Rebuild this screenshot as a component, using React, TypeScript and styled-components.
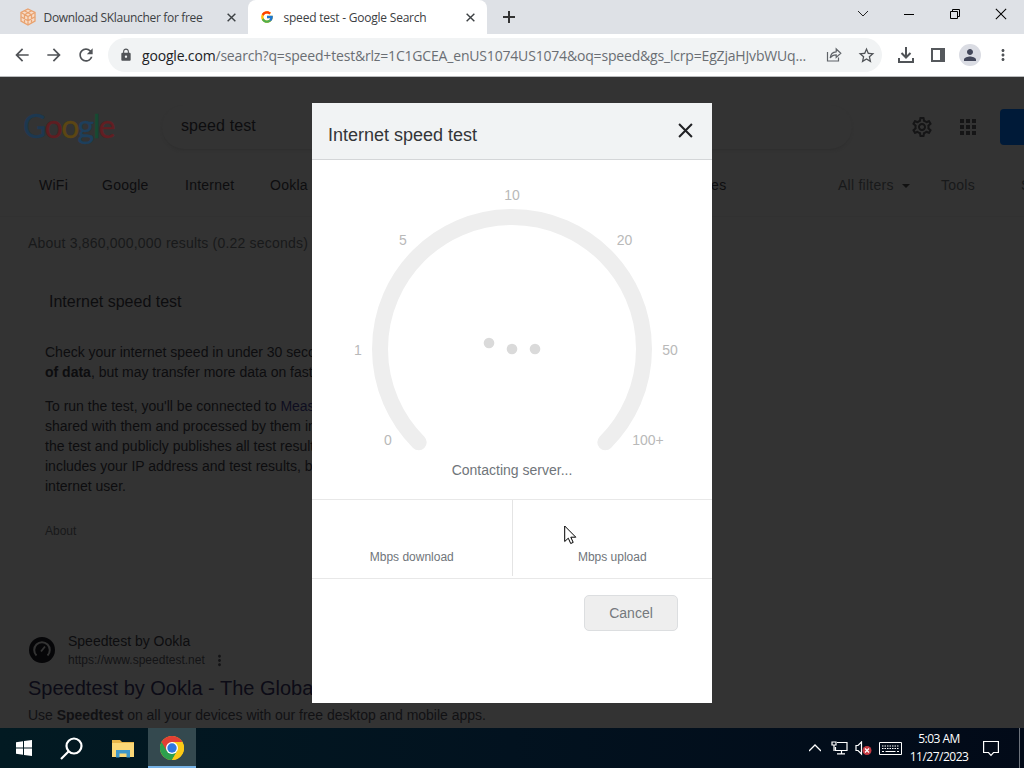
import styled, { createGlobalStyle } from 'styled-components';
import {
  MdApps,
  MdArrowBack,
  MdArrowForward,
  MdLock,
  MdMoreVert,
  MdOutlineSettings,
  MdPerson,
  MdRefresh,
  MdStarBorder,
} from 'react-icons/md';
import { FcGoogle } from 'react-icons/fc';

const filters = [
  { label: 'WiFi', width: 63 },
  { label: 'Google', width: 83 },
  { label: 'Internet', width: 85 },
  { label: 'Ookla', width: 409 },
];

const marks = [
  { label: '0', x: 76, y: 286 },
  { label: '1', x: 46, y: 196 },
  { label: '5', x: 91, y: 86 },
  { label: '10', x: 200, y: 41 },
  { label: '20', x: 312.5, y: 86 },
  { label: '50', x: 358, y: 196 },
  { label: '100+', x: 336, y: 286 },
];

const CloseIcon = ({ size, weight }: { size: number; weight: number }) => (
  <svg width={size} height={size} viewBox='0 0 14 14' stroke='currentColor' strokeWidth={weight}>
    <path d='M1 1l12 12M13 1L1 13' />
  </svg>
);

const CubeIcon = () => (
  <svg width='16' height='18' viewBox='0 0 16 18' fill='none' stroke='#e9a26f' strokeWidth='1.3'>
    <path d='M8 1l7 3.5v8.5L8 17l-7-4V4.5z' fill='#f7dcc8' />
    <path d='M1 4.5l7 4 7-4M8 8.5V17M4.500 2.800l7 4v8M11.5 2.800l-7 4v8M1 8.800l7 4 7-4' />
  </svg>
);

const ShareIcon = () => (
  <svg width='16' height='16' viewBox='0 0 16 16' fill='none' stroke='#5f6368' strokeWidth='1.2'>
    <path d='M1.5 5v9h11v-3.5' />
    <path d='M4.2 11c.4-4 2.6-6 6-6.2V2l4.6 4.3-4.6 4.2V7.8C7.5 7.8 5.6 8.8 4.2 11z' />
  </svg>
);

const DownloadIcon = () => (
  <svg width='18' height='18' viewBox='0 0 18 18' fill='none' stroke='#505357' strokeWidth='2'>
    <path d='M9 1v10M4.5 7L9 11.5 13.5 7M2 12v4h14v-4' />
  </svg>
);

const SidePanelIcon = () => (
  <svg width='14' height='14' viewBox='0 0 14 14' fill='none'>
    <path d='M1 1h12v12H1z' stroke='#55585c' strokeWidth='2' />
    <path d='M9 1h4v12H9z' fill='#55585c' />
  </svg>
);

const ChromeIcon = () => (
  <svg width='24' height='24' viewBox='0 0 24 24'>
    <circle cx='12' cy='12' r='12' fill='#fbc916' />
    <path d='M12 12L1.6 6A12 12 0 0 0 12 24l5.2-9z' fill='#2da04d' />
    <path d='M1.6 6a12 12 0 0 1 20.8 0H12v6l-5.2 3z' fill='#e23f34' />
    <path d='M12 6h10.4A12 12 0 0 1 12 24l5.2-9z' fill='#fbc916' />
    <circle cx='12' cy='12' r='6' fill='#fff' />
    <circle cx='12' cy='12' r='4.7' fill='#2f77e0' />
  </svg>
);

const App = () => (
  <>
    <GlobalStyle />
    <Screen>
      <TabStrip>
        <Tab $width={248}>
          <TabIcon>
            <CubeIcon />
          </TabIcon>
          <TabTitle $spacing={-0.32}>Download SKlauncher for free</TabTitle>
          <CloseIcon size={9} weight={2.2} />
        </Tab>
        <Tab $width={239} $active>
          <TabIcon>
            <FcGoogle size={14} />
          </TabIcon>
          <TabTitle $spacing={-0.22}>speed test - Google Search</TabTitle>
          <CloseIcon size={9} weight={2.2} />
        </Tab>
        <NewTab>
          <svg width='12' height='12' viewBox='0 0 12 12' stroke='#333' strokeWidth='2'>
            <path d='M6 0v12M0 6h12' />
          </svg>
        </NewTab>
        <WindowButtons>
          <svg width='12' height='12' viewBox='0 0 12 12' fill='none' stroke='#222'>
            <path d='M1 3l5 5 5-5' />
          </svg>
          <svg width='10' height='12' viewBox='0 0 10 12' fill='none' stroke='#000'>
            <path d='M0 6.5h10' />
          </svg>
          <svg width='10' height='10' viewBox='0 0 10 10' fill='none' stroke='#000'>
            <path d='M.5 2.5h7v7h-7zM2.5 2.5v-2h7v7h-2' />
          </svg>
          <CloseIcon size={12} weight={1.2} />
        </WindowButtons>
      </TabStrip>

      <Toolbar>
        <NavButtons>
          <MdArrowBack />
          <MdArrowForward />
          <MdRefresh />
        </NavButtons>
        <AddressBar>
          <MdLock size={14} />
          <Url>
            <b>google.com</b>/search?q=speed+test&amp;rlz=1C1GCEA_enUS1074US1074&amp;oq=speed&amp;gs_lcrp=EgZjaHJvbWUq...
          </Url>
          <ShareIcon />
          <MdStarBorder size={19} />
        </AddressBar>
        <ToolbarActions>
          <DownloadIcon />
          <SidePanelIcon />
          <Avatar>
            <MdPerson size={18} />
          </Avatar>
          <MdMoreVert size={18} />
        </ToolbarActions>
      </Toolbar>

      <Page>
        <SearchHeader>
          <Logo>
            <Letter $color='#1d3850'>G</Letter>
            <Letter $color='#5e1d21'>o</Letter>
            <Letter $color='#5c4613'>o</Letter>
            <Letter $color='#1d3f5c'>g</Letter>
            <Letter $color='#164a32'>l</Letter>
            <Letter $color='#621e22'>e</Letter>
          </Logo>
          <SearchBox>speed test</SearchBox>
          <HeaderActions>
            <MdOutlineSettings size={24} />
            <MdApps size={24} />
            <SignIn />
          </HeaderActions>
        </SearchHeader>

        <FilterRow>
          {filters.map(({ label, width }) => (
            <Filter key={label} $width={width}>
              {label}
            </Filter>
          ))}
          <Filter $width={159}>Images</Filter>
          <Filter $width={68} $dim>
            All filters
          </Filter>
          <Caret />
          <Filter $width={80} $dim>
            Tools
          </Filter>
          <Filter $width={80} $dim>
            S
          </Filter>
        </FilterRow>
        <Stats>About 3,860,000,000 results (0.22 seconds)</Stats>

        <Card>
          <CardTitle>Internet speed test</CardTitle>
          <Paragraph>
            Check your internet speed in under 30 seconds.
            <br />
            <b>of data</b>, but may transfer more data on fast
          </Paragraph>
          <Paragraph>
            To run the test, you'll be connected to <Purple>Meas</Purple>
            <br />
            shared with them and processed by them in
            <br />
            the test and publicly publishes all test results
            <br />
            includes your IP address and test results, b<br />
            internet user.
          </Paragraph>
          <About>About</About>
        </Card>

        <Result>
          <ResultSite>
            <svg width='26' height='26' viewBox='0 0 26 26' fill='none'>
              <circle cx='13' cy='13' r='13' fill='#060608' />
              <path d='M7.5 18.5a7.8 7.8 0 1 1 11 0' stroke='#333' strokeWidth='2' />
              <path d='M12 14.5l4-5' stroke='#333' strokeWidth='1.8' />
            </svg>
            <div>
              <SiteName>Speedtest by Ookla</SiteName>
              <SiteUrl>
                https://www.speedtest.net
                <MdMoreVert size={17} />
              </SiteUrl>
            </div>
          </ResultSite>
          <ResultTitle>Speedtest by Ookla - The Global</ResultTitle>
          <ResultText>
            Use <b>Speedtest</b> on all your devices with our free desktop and mobile apps.
          </ResultText>
        </Result>

        <Overlay>
          <Dialog>
            <DialogHeader>
              Internet speed test
              <CloseIcon size={15} weight={1.9} />
            </DialogHeader>
            <GaugeArea>
              <svg width='400' height='296' viewBox='0 0 400 296'>
                <path
                  d='M106.7 282.3A132 132 0 1 1 293.3 282.3'
                  fill='none'
                  stroke='#eee'
                  strokeWidth='16'
                  strokeLinecap='round'
                />
                {marks.map(({ label, x, y }) => (
                  <Mark key={label} x={x} y={y - 1}>
                    {label}
                  </Mark>
                ))}
                <circle cx='177' cy='183' r='5.3' fill='#dadada' />
                <circle cx='200' cy='189' r='5.3' fill='#dadada' />
                <circle cx='223' cy='189' r='5.3' fill='#dadada' />
              </svg>
              <Status>Contacting server...</Status>
            </GaugeArea>
            <Speeds>
              <Speed>Mbps download</Speed>
              <Divider />
              <Speed>Mbps upload</Speed>
            </Speeds>
            <DialogFooter>
              <CancelButton>Cancel</CancelButton>
            </DialogFooter>
          </Dialog>
        </Overlay>
      </Page>

      <Taskbar>
        <TaskItem>
          <svg width='16' height='16' viewBox='0 0 16 16' fill='#fff'>
            <path d='M0 2.3L7 1.3v6.2H0zM8 1.1L16 0v7.5H8zM0 8.5h7v6.2l-7-1zM8 8.5h8V16l-8-1.1z' />
          </svg>
        </TaskItem>
        <TaskItem>
          <svg width='23' height='23' viewBox='0 0 23 23' fill='none' stroke='#fff' strokeWidth='2.2'>
            <circle cx='14' cy='9' r='7.5' />
            <path d='M8.5 14.5L1 22' />
          </svg>
        </TaskItem>
        <TaskItem>
          <svg width='22' height='19' viewBox='0 0 22 19'>
            <path d='M0 1h8l2 2h12v15H0z' fill='#e8b64a' />
            <path d='M0 4h22v14H0z' fill='#fbd877' />
            <path d='M4 18.5V11h14v7.5h-3.500V14.5h-7v4z' fill='#3f97c9' />
          </svg>
        </TaskItem>
        <TaskItem $active>
          <ChromeIcon />
        </TaskItem>
        <Tray>
          <svg width='12' height='8' viewBox='0 0 12 8' fill='none' stroke='#fff' strokeWidth='1.3'>
            <path d='M0 7l6-6 6 6' />
          </svg>
          <svg width='17' height='14' viewBox='0 0 17 14' fill='none' stroke='#fff' strokeWidth='1.2'>
            <path d='M6 1.5h10v8H4.5V6M10.5 9.5v3M6 12.8h8M1 1h4v3H1zM3 4v6' />
          </svg>
          <svg width='17' height='15' viewBox='0 0 17 15' fill='none'>
            <path d='M1 4.5h2L6.5 1v12L3 9.5H1z' stroke='#fff' strokeWidth='1.2' />
            <circle cx='12' cy='9.5' r='4.5' fill='#c63b43' />
            <path d='M10 7.5l4 4M14 7.5l-4 4' stroke='#fff' strokeWidth='1.2' />
          </svg>
          <svg width='23' height='13' viewBox='0 0 23 13' fill='none' stroke='#fff'>
            <path d='M.5 .5h22v12H.5z' />
            <path d='M3 4h17M3 6.5h17' strokeDasharray='1.5 1' />
            <path d='M3 9.5h2M6.5 9.5h10M18 9.5h2' />
          </svg>
          <Clock>
            <span>5:03 AM</span>
            <span>11/27/2023</span>
          </Clock>
          <svg width='16' height='17' viewBox='0 0 16 17' fill='none' stroke='#fff' strokeWidth='1.2'>
            <path d='M.6 1.5h14.8v11h-4.9L8 15.3 5.5 12.5H.6z' />
          </svg>
        </Tray>
      </Taskbar>

      <Cursor width='13' height='20' viewBox='0 0 13 20'>
        <path
          d='M.7 1v15.5l3.6-3.3 2.4 5.3 2.5-1.1-2.4-5.2h5z'
          fill='#fff'
          stroke='#000'
          strokeWidth='1'
        />
      </Cursor>
    </Screen>
  </>
);

export default App;

const GlobalStyle = createGlobalStyle`
  * {
    box-sizing: border-box;
  }

  body {
    margin: 0;
    overflow: hidden;
    font-family: 'Liberation Sans', Arial, sans-serif;
  }

  svg {
    display: block;
    flex-shrink: 0;
  }
`;

const Screen = styled.div`
  position: relative;
  display: flex;
  flex-direction: column;
  width: 1024px;
  height: 768px;
  overflow: hidden;
`;

const TabStrip = styled.div`
  display: flex;
  height: 34px;
  background: #dee1e6;
`;

const Tab = styled.div<{ $width: number; $active?: boolean }>`
  display: flex;
  align-items: center;
  width: ${({ $width }) => $width}px;
  padding: 0 12px 0 ${({ $active }) => ($active ? 12 : 20)}px;
  border-radius: 8px 8px 0 0;
  background: ${({ $active }) => ($active ? '#fff' : 'transparent')};
  color: #3c4043;
`;

const TabIcon = styled.div`
  display: flex;
  width: 24px;
`;

const TabTitle = styled.div<{ $spacing: number }>`
  flex: 1;
  margin-left: -0.5px;
  font-family: 'Open Sans', sans-serif;
  font-size: 12px;
  letter-spacing: ${({ $spacing }) => $spacing}px;
  white-space: nowrap;
`;

const NewTab = styled.div`
  display: flex;
  align-items: center;
  flex: 1;
  padding-left: 16px;
`;

const WindowButtons = styled.div`
  display: flex;
  align-items: center;
  gap: 35.5px;
  padding: 0 17px 6px 0;
`;

const Toolbar = styled.div`
  display: flex;
  align-items: center;
  height: 43px;
  background: #fff;
  border-bottom: 1px solid #b9bbbd;
  color: #505357;
`;

const NavButtons = styled.div`
  display: flex;
  gap: 12px;
  width: 108px;
  padding-left: 12px;
  font-size: 20px;
`;

const AddressBar = styled.div`
  display: flex;
  align-items: center;
  width: 774px;
  height: 34px;
  padding: 0 6px 0 11px;
  border-radius: 17px;
  background: #f1f3f4;
`;

const Url = styled.div`
  flex: 1;
  padding-left: 9px;
  font-family: 'Open Sans', sans-serif;
  font-size: 14px;
  letter-spacing: -0.18px;
  white-space: nowrap;
  color: #6a6e73;

  b {
    font-weight: 400;
    color: #202124;
  }

  & + svg {
    margin-right: 15px;
  }
`;

const ToolbarActions = styled.div`
  display: flex;
  align-items: center;
  gap: 16px;
  padding-left: 15px;
`;

const Avatar = styled.div`
  display: flex;
  align-items: center;
  justify-content: center;
  width: 22px;
  height: 22px;
  margin: 0 -3px 0 -2px;
  border-radius: 50%;
  background: #dadce3;
  color: #43475a;
`;

const Page = styled.div`
  position: relative;
  height: 651px;
  overflow: hidden;
  background: #333;
  color: #0d0d0f;
  white-space: nowrap;
`;

const SearchHeader = styled.div`
  display: flex;
  align-items: center;
  height: 88px;
  padding: 12px 0 0 23px;
`;

const Logo = styled.div`
  flex-shrink: 0;
  width: 139px;
  padding-bottom: 4px;
  font-family: Lato, sans-serif;
  font-size: 32px;
  letter-spacing: -1.6px;
  -webkit-text-stroke: 0.4px;
`;

const Letter = styled.span<{ $color: string }>`
  color: ${({ $color }) => $color};
`;

const SearchBox = styled.div`
  display: flex;
  align-items: center;
  flex-shrink: 0;
  width: 690px;
  height: 44px;
  padding: 0 0 2px 19px;
  border-radius: 22px;
  box-shadow: 0 2px 3px -1px #2e2e2e;
  font-size: 16px;
  letter-spacing: 0.1px;
`;

const HeaderActions = styled.div`
  display: flex;
  align-items: center;
  gap: 22px;
  flex-shrink: 0;
  padding-left: 58px;
  color: #151516;
`;

const SignIn = styled.div`
  width: 90px;
  height: 36px;
  margin-left: -2px;
  border-radius: 4px;
  background: #001a38;
`;

const FilterRow = styled.div`
  display: flex;
  align-items: center;
  height: 52px;
  padding: 0 0 12px 39px;
  border-bottom: 1px solid #313131;
  font-size: 14px;
  letter-spacing: 0.25px;
`;

const Filter = styled.div<{ $width: number; $dim?: boolean }>`
  flex-shrink: 0;
  width: ${({ $width }) => $width}px;
  color: ${({ $dim }) => ($dim ? '#18191a' : '#0d0d0f')};
`;

const Caret = styled.div`
  margin: 2px 31px 0 -4px;
  border: 4px solid transparent;
  border-top-color: #111;
  border-bottom: 0;
`;

const Stats = styled.div`
  height: 52px;
  padding: 18px 0 0 28px;
  font-size: 14px;
  letter-spacing: 0.2px;
  color: #18191a;
`;

const Card = styled.div`
  height: 363px;
  padding: 24px 0 0 45px;
`;

const CardTitle = styled.div`
  margin-bottom: 31px;
  padding-left: 4px;
  font-size: 16px;
`;

const Paragraph = styled.p`
  margin: 0 0 14px;
  font-size: 14px;
  line-height: 20px;
`;

const Purple = styled.span`
  color: #0e0e20;
`;

const About = styled.div`
  margin-top: 28px;
  font-size: 12px;
  color: #18191a;
`;

const Result = styled.div`
  padding-left: 28px;
`;

const ResultSite = styled.div`
  display: flex;
  align-items: center;
  gap: 13px;
  height: 37px;
  padding-left: 1px;

  & > svg {
    margin-bottom: 2px;
  }
`;

const SiteName = styled.div`
  font-size: 14px;
  line-height: 18px;
`;

const SiteUrl = styled.div`
  display: flex;
  align-items: center;
  gap: 6px;
  margin-top: 1px;
  font-size: 12px;
  line-height: 18px;
  color: #141416;
`;

const ResultTitle = styled.div`
  margin-top: 6px;
  font-size: 20px;
  line-height: 26px;
  color: #0c0b16;
`;

const ResultText = styled.div`
  margin-top: 4px;
  font-size: 14px;
  line-height: 20px;
  letter-spacing: -0.03px;
  color: #111113;
`;

const Overlay = styled.div`
  position: absolute;
  inset: 0;
  display: flex;
  justify-content: center;
  align-items: flex-start;
  padding-top: 26px;
`;

const Dialog = styled.div`
  width: 400px;
  height: 600px;
  background: #fff;
`;

const DialogHeader = styled.div`
  display: flex;
  justify-content: space-between;
  height: 57px;
  padding: 22px 19.5px 0 16px;
  border-bottom: 1px solid #d4d6d8;
  background: #f1f3f4;
  font-size: 18px;
  color: #333538;

  svg {
    margin-top: -2.5px;
    color: #202124;
  }
`;

const GaugeArea = styled.div`
  height: 339px;
`;

const Mark = styled.text`
  font-size: 14px;
  text-anchor: middle;
  fill: #b9b9b9;
`;

const Status = styled.div`
  margin-top: 6px;
  font-size: 14px;
  line-height: 16px;
  text-align: center;
  color: #70757a;
`;

const Speeds = styled.div`
  display: flex;
  height: 80px;
  border-top: 1px solid #e8e8e8;
  border-bottom: 1px solid #e8e8e8;
`;

const Speed = styled.div`
  flex: 1;
  padding-top: 50px;
  font-size: 12px;
  text-align: center;
  color: #70757a;
`;

const Divider = styled.div`
  width: 1px;
  height: 76px;
  background: #e4e4e4;
`;

const DialogFooter = styled.div`
  display: flex;
  justify-content: flex-end;
  padding: 16px 34px;
`;

const CancelButton = styled.button`
  width: 94px;
  height: 36px;
  padding: 0;
  border: 1px solid #dcdee0;
  border-radius: 5px;
  background: #eee;
  font-family: inherit;
  font-size: 14px;
  color: #75797d;
`;

const Taskbar = styled.div`
  display: flex;
  height: 40px;
  background: linear-gradient(90deg, #021a22, #02121f 50%, #020a18);
`;

const TaskItem = styled.div<{ $active?: boolean }>`
  display: flex;
  align-items: center;
  justify-content: center;
  width: ${({ $active }) => ($active ? 48 : 49.33)}px;
  padding-top: 2px;
  border-bottom: 2px solid ${({ $active }) => ($active ? '#76b2e6' : 'transparent')};
  background: ${({ $active }) => ($active ? '#34494f' : 'transparent')};

  &:first-child {
    padding-right: 2px;
  }

  &:nth-child(2) {
    padding-right: 4px;
  }
`;

const Tray = styled.div`
  display: flex;
  align-items: center;
  margin-left: auto;
  margin-right: 4px;
  gap: 7px;
  padding-right: 20px;
  border-right: 1px solid #6d737c;

  & > svg:first-child {
    margin-right: 3px;
  }
`;

const Clock = styled.div`
  display: flex;
  flex-direction: column;
  align-items: center;
  width: 58px;
  margin: 0 8px 0 1px;
  font-family: 'Open Sans', sans-serif;
  font-size: 12px;
  line-height: 18px;
  letter-spacing: -0.5px;
  white-space: nowrap;
  color: #fff;
`;

const Cursor = styled.svg`
  position: absolute;
  left: 564px;
  top: 525px;
`;
